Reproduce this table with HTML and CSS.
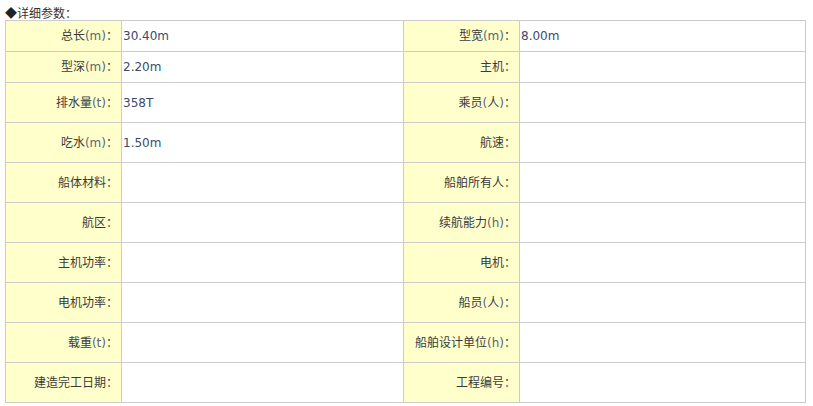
FILE: index.html
```html
<!DOCTYPE html>
<html lang="zh">
<head>
<meta charset="utf-8">
<link rel="stylesheet" href="styles.css">
</head>
<body>
<div class="title"><span class="dia">◆</span>详细参数：</div>
<table class="spec">
  <colgroup><col class="c-label"><col class="c-val-l"><col class="c-label"><col class="c-val-r"></colgroup>
  <tr class="short"><td class="lab">总长<span class="u">(m)</span>：</td><td class="val">30.40m</td><td class="lab">型宽<span class="u">(m)</span>：</td><td class="val">8.00m</td></tr>
  <tr class="short"><td class="lab">型深<span class="u">(m)</span>：</td><td class="val">2.20m</td><td class="lab">主机：</td><td class="val"></td></tr>
  <tr><td class="lab">排水量<span class="u">(t)</span>：</td><td class="val">358T</td><td class="lab">乘员<span class="u">(</span>人<span class="u">)</span>：</td><td class="val"></td></tr>
  <tr><td class="lab">吃水<span class="u">(m)</span>：</td><td class="val">1.50m</td><td class="lab">航速：</td><td class="val"></td></tr>
  <tr><td class="lab">船体材料：</td><td class="val"></td><td class="lab">船舶所有人：</td><td class="val"></td></tr>
  <tr><td class="lab">航区：</td><td class="val"></td><td class="lab">续航能力<span class="u">(h)</span>：</td><td class="val"></td></tr>
  <tr><td class="lab">主机功率：</td><td class="val"></td><td class="lab">电机：</td><td class="val"></td></tr>
  <tr><td class="lab">电机功率：</td><td class="val"></td><td class="lab">船员<span class="u">(</span>人<span class="u">)</span>：</td><td class="val"></td></tr>
  <tr><td class="lab">载重<span class="u">(t)</span>：</td><td class="val"></td><td class="lab">船舶设计单位<span class="u">(h)</span>：</td><td class="val"></td></tr>
  <tr><td class="lab">建造完工日期：</td><td class="val"></td><td class="lab">工程编号：</td><td class="val"></td></tr>
</table>
</body>
</html>
```

FILE: styles.css
```css
html, body { margin: 0; padding: 0; background: #fff; }
body {
  padding: 5px 0 0 5px;
  font-family: "DejaVu Sans", "Noto Sans CJK SC", sans-serif;
  font-size: 12px;
  color: #333;
}
.title {
  height: 15px;
  line-height: 15px;
  color: #333;
}
.dia {
  color: #222;
  font-family: "Noto Sans CJK SC", sans-serif;
  font-size: 12px;
}
.spec {
  border-collapse: collapse;
  width: 800px;
  table-layout: fixed;
}
.c-label { width: 116px; }
.c-val-l { width: 282px; }
.c-val-r { width: 286px; }
.spec td {
  border: 1px solid #cccccc;
  height: 39px;
  padding: 0;
  vertical-align: middle;
  line-height: 16px;
}
.spec tr.short td { height: 30px; }
.spec td.lab {
  background: #ffffcc;
  text-align: right;
  padding-right: 3px;
  color: #3a3a3a;
}
.spec td.val {
  padding-left: 1px;
  color: #3b4a6b;
}
.u { color: #5a6478; }
```
